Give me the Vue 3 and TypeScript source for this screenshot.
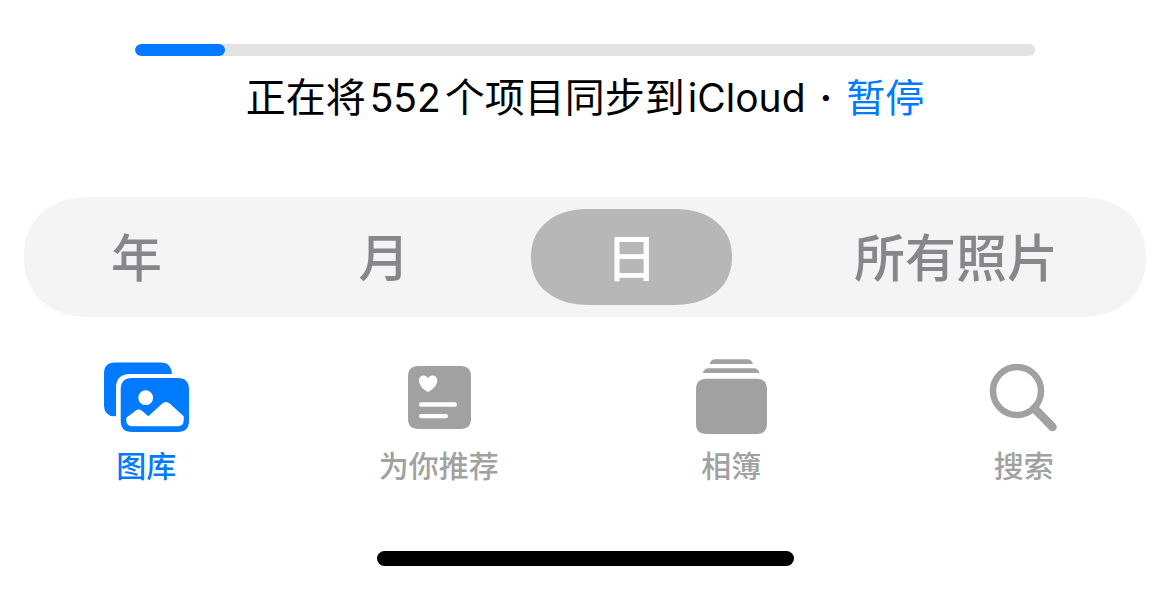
<script setup lang="ts">
import { ref } from 'vue'

type TabId = 'library' | 'forYou' | 'albums' | 'search'

const total = ref<number>(552)
const progress = ref<number>(10)
const paused = ref<boolean>(false)

const ranges: string[] = ['年', '月', '日', '所有照片']
const activeRange = ref<string>('日')

const tabs: { id: TabId; label: string }[] = [
  { id: 'library', label: '图库' },
  { id: 'forYou', label: '为你推荐' },
  { id: 'albums', label: '相簿' },
  { id: 'search', label: '搜索' },
]
const activeTab = ref<TabId>('library')
</script>

<template>
  <main class="photos">
    <section class="sync">
      <progress class="sync-bar" :value="progress" max="100" aria-labelledby="sync-text"></progress>
      <div class="sync-line">
        <span id="sync-text">正在将<span class="latin count">{{ total }}</span>个项目同步到<span class="latin cloud">iCloud</span></span>
        <span class="dot">·</span>
        <button type="button" class="pause" :aria-pressed="paused" @click="paused = !paused">暂停</button>
      </div>
    </section>

    <div class="ranges" role="group">
      <button
        v-for="range in ranges"
        :key="range"
        type="button"
        class="range"
        :class="{ active: range === activeRange }"
        :aria-pressed="range === activeRange"
        @click="activeRange = range"
      >{{ range }}</button>
    </div>

    <nav class="tabs">
      <a
        v-for="tab in tabs"
        :key="tab.id"
        class="tab"
        :class="{ active: tab.id === activeTab }"
        :href="'#' + tab.id"
        @click="activeTab = tab.id"
      >
        <svg class="icon" viewBox="0 0 90 80" fill="currentColor" aria-hidden="true">
          <template v-if="tab.id === 'library'">
            <path d="M15 60.3H13.5Q3 60 3 49.5V17.5Q3 6.5 14 6.5H60Q70 6.5 71 18H29Q15 18 15 32Z" />
            <path fill-rule="evenodd" d="M31 22H76.700Q88 22 88 33.500V64.500Q88 76 76.700 76H31Q19.700 76 19.700 64.500V33.500Q19.700 22 31 22ZM44.700 34.300a7.400 7.400 0 1 0 0 14.800a7.400 7.400 0 1 0 0-14.800ZM25.300 61.700V64Q25.300 70.300 31.500 70.300H76.500Q82.700 70.300 82.700 64V60.300L69 47.700Q65 44.300 61 47.700L47.300 60.300L41 54.800Q37.800 52.200 34.500 54.800Z" />
          </template>
          <template v-else-if="tab.id === 'forYou'">
            <path fill-rule="evenodd" d="M24.500 10H66.500Q77 10 77 20.500V62.500Q77 73 66.500 73H24.500Q14 73 14 62.500V20.500Q14 10 24.500 10ZM34 36C30.500 34.500 25 29.500 25 24.700C25 18.500 32 17.800 34 22.300C36 17.800 43.300 18.500 43.300 24.700C43.300 29.500 37.500 34.500 34 36ZM27.200 46.300a2.200 2.200 0 0 0 0 4.400H60.800a2.200 2.200 0 0 0 0-4.400ZM27.200 57.900a2.200 2.200 0 0 0 0 4.400H51.800a2.200 2.200 0 0 0 0-4.400Z" />
          </template>
          <template v-else-if="tab.id === 'albums'">
            <path d="M23.700 8Q25 3.300 29 3.300H61.500Q65.500 3.300 67 8Z" />
            <path d="M16.700 17Q18.500 12.300 22.500 12.300H68Q72 12.300 73.700 17Z" />
            <path d="M20.500 22.700H70.500Q81 22.700 81 33.200V67.500Q81 78 70.500 78H20.500Q10 78 10 67.500V33.200Q10 22.700 20.500 22.700Z" />
          </template>
          <g v-else fill="none" stroke="currentColor">
            <circle cx="38" cy="35" r="24" stroke-width="6.500" />
            <path d="M55.500 52.500L73.500 71" stroke-width="8.500" stroke-linecap="round" />
          </g>
        </svg>
        <span class="label">{{ tab.label }}</span>
      </a>
    </nav>

    <div class="home-indicator"></div>
  </main>
</template>

<style>
body {
  margin: 0;
  background: #fff;
}
</style>

<style scoped>
.photos {
  box-sizing: border-box;
  display: flex;
  flex-direction: column;
  padding: 44px 0 24px;
  color: #000;
  font-family: "Noto Sans CJK SC", sans-serif;
}

button {
  margin: 0;
  padding: 0;
  border: 0;
  background: none;
  font-family: inherit;
  cursor: pointer;
}

.sync {
  display: flex;
  flex-direction: column;
  align-items: center;
  gap: 11px;
}

.sync-bar {
  appearance: none;
  display: block;
  width: 77%;
  height: 12px;
  border: 0;
  border-radius: 6px;
  overflow: hidden;
  background: #e3e3e4;
}

.sync-bar::-webkit-progress-bar {
  background: #e3e3e4;
  border-radius: 6px;
}

.sync-bar::-webkit-progress-value {
  background: #007aff;
  border-radius: 6px;
}

.sync-line {
  display: flex;
  align-items: baseline;
  font-size: 40px;
  line-height: 56px;
  white-space: nowrap;
}

.latin {
  font-family: Inter, sans-serif;
  font-size: 39px;
}

.count {
  margin: 0 4px;
}

.cloud {
  margin-left: 3px;
}

.dot {
  padding: 0 14px;
  font-family: Inter, sans-serif;
  font-weight: 600;
}

.pause {
  color: #007aff;
  font-size: 39px;
  line-height: 56px;
}

.ranges {
  display: grid;
  grid-template-columns: 201fr 202fr 201fr 356fr;
  gap: 46px;
  margin: 71px 24px 0;
  padding: 12px;
  border-radius: 66px / 60px;
  corner-shape: superellipse(1.15);
  background: #f4f4f4;
}

.range {
  height: 96px;
  padding-bottom: 4px;
  border-radius: 58px / 48px;
  corner-shape: superellipse(1.15);
  color: #87878b;
  font-size: 51px;
  font-weight: 500;
  line-height: 92px;
  white-space: nowrap;
}

.range.active {
  background: #b7b7b7;
  color: #fff;
}

.tabs {
  display: grid;
  grid-template-columns: repeat(4, 1fr);
  margin-top: 39px;
}

.tab {
  display: flex;
  flex-direction: column;
  align-items: center;
  gap: 8px;
  color: #a1a1a1;
  text-decoration: none;
}

.tab.active {
  color: #007aff;
}

.icon {
  display: block;
  width: 90px;
  height: 80px;
}

.label {
  font-size: 30px;
  font-weight: 500;
  line-height: 40px;
}

.home-indicator {
  align-self: center;
  width: 35%;
  min-width: 417px;
  height: 15px;
  margin-top: 67px;
  border-radius: 8px;
  background: #000;
}
</style>
